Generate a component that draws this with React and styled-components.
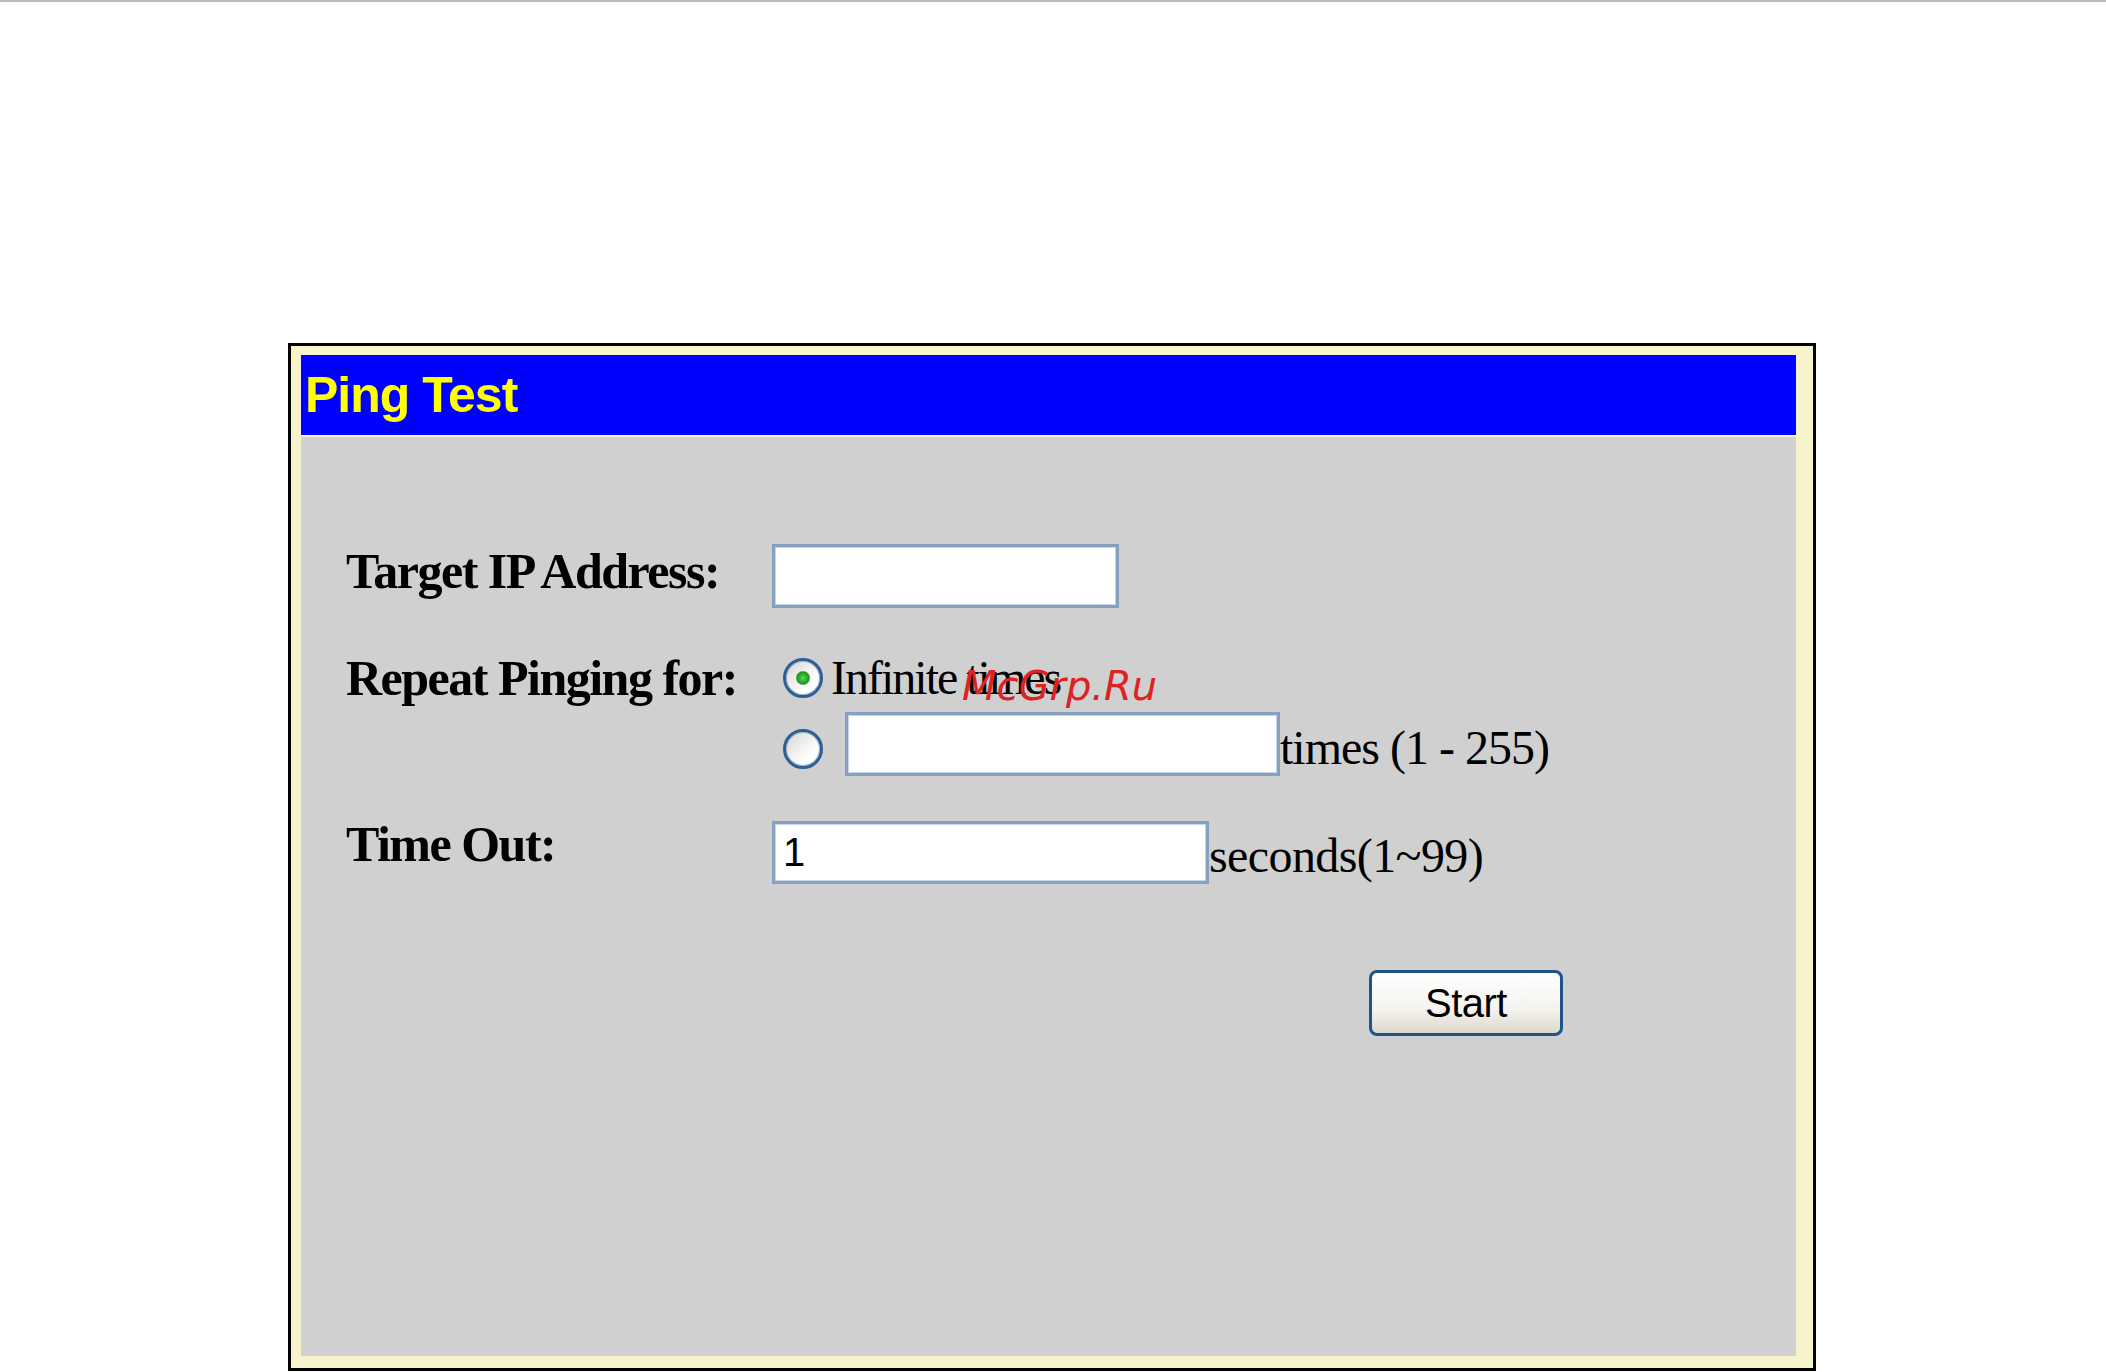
import styled, { createGlobalStyle } from "styled-components";

const GlobalStyle = createGlobalStyle`
  html, body {
    margin: 0;
    padding: 0;
    background: #ffffff;
  }
  * {
    box-sizing: border-box;
  }
`;

const Page = styled.div`
  width: 2106px;
  min-height: 1372px;
  background: #ffffff;
`;

const TopRule = styled.div`
  height: 2px;
  background: #bbbbbb;
`;

const Frame = styled.div`
  width: 1528px;
  margin: 341px 0 0 288px;
  border: 3px solid #000000;
  padding: 9px 17px 12px 10px;
  background: #f5f2cc;
`;

const TitleBar = styled.div`
  height: 80px;
  margin-bottom: 2px;
  padding-left: 4px;
  background: #0000ff;
  color: #ffff00;
  font-family: "Liberation Sans", Arial, sans-serif;
  font-weight: bold;
  font-size: 50px;
  letter-spacing: -1px;
  line-height: 80px;
`;

const Panel = styled.div`
  position: relative;
  height: 919px;
  padding: 106px 0 0 45px;
  background: #d0d0d0;
  font-family: "Liberation Serif", "Times New Roman", serif;
  color: #000000;
`;

const FormRow = styled.div`
  display: grid;
  grid-template-columns: 426px 1fr;
  align-items: start;
  margin-bottom: ${(p) => p.$gap || 0}px;
`;

const Label = styled.div`
  font-weight: bold;
  font-size: 50px;
  line-height: 56px;
  letter-spacing: -1.5px;
  white-space: nowrap;
`;

const Field = styled.div`
  display: flex;
  flex-direction: column;
  gap: ${(p) => p.$gap || 0}px;
  padding-top: ${(p) => p.$offset || 0}px;
`;

const Line = styled.div`
  display: flex;
  align-items: ${(p) => (p.$bottom ? "flex-end" : "center")};
  height: ${(p) => p.$height}px;
`;

const Text = styled.span`
  font-size: 48px;
  line-height: 56px;
  letter-spacing: ${(p) => p.$spacing ?? -1}px;
  white-space: nowrap;
  margin-left: ${(p) => p.$indent || 0}px;
`;

const TextBox = styled.input`
  width: ${(p) => p.$width}px;
  height: ${(p) => p.$height}px;
  margin: 0 0 0 ${(p) => p.$indent || 0}px;
  padding: 0 8px;
  border: 3px solid #86a0c2;
  box-shadow: inset 0 0 0 1px #c9d6e6;
  background: #ffffff;
  font-family: "Liberation Sans", Arial, sans-serif;
  font-size: 40px;
  color: #000000;
  outline: none;
`;

const Radio = styled.input`
  appearance: none;
  width: 40px;
  height: 40px;
  margin: 0 0 0 11px;
  flex: none;
  align-self: ${(p) => (p.$drop ? "flex-start" : "center")};
  margin-top: ${(p) => p.$drop || 0}px;
  border-radius: 50%;
  border: 3px solid #2d5f92;
  box-shadow: inset 0 0 0 1px #9db4cf;
  background: ${(p) =>
    p.checked
      ? "radial-gradient(circle, #5ad85a 0, #22a322 5px, #1b8f1b 6px, transparent 7.5px), linear-gradient(135deg, #d6d6d0, #ffffff 70%)"
      : "linear-gradient(135deg, #d6d6d0, #ffffff 70%)"};
`;

const ButtonRow = styled.div`
  display: flex;
  justify-content: flex-end;
  width: 1217px;
`;

const Button = styled.button`
  width: 194px;
  height: 66px;
  border: 3px solid #1f548a;
  border-radius: 8px;
  background: linear-gradient(#ffffff, #f4f3ef 60%, #dcd8cd);
  font-family: "Liberation Sans", Arial, sans-serif;
  font-size: 40px;
  letter-spacing: -0.5px;
  color: #000000;
  padding: 0;
`;

const Watermark = styled.div`
  position: absolute;
  left: 661px;
  top: 229px;
  font-family: "DejaVu Sans", sans-serif;
  font-style: italic;
  font-size: 40px;
  line-height: 1;
  color: #dd2222;
  pointer-events: none;
`;

const App = () => {
  return (
    <Page>
      <GlobalStyle />
      <TopRule />
      <Frame>
        <TitleBar>Ping Test</TitleBar>
        <Panel>
          <FormRow $gap={42}>
            <Label>Target IP Address:</Label>
            <Field $offset={1}>
              <TextBox $width={347} $height={64} defaultValue="" />
            </Field>
          </FormRow>
          <FormRow $gap={40}>
            <Label>Repeat Pinging for:</Label>
            <Field $gap={6}>
              <Line $height={56}>
                <Radio type="radio" name="repeat" checked readOnly />
                <Text $indent={8} $spacing={-2}>Infinite times</Text>
              </Line>
              <Line $height={64} $bottom>
                <Radio type="radio" name="repeat" checked={false} readOnly $drop={17} />
                <TextBox $width={435} $height={64} $indent={22} defaultValue="" />
                <Text>times (1 - 255)</Text>
              </Line>
            </Field>
          </FormRow>
          <FormRow $gap={86}>
            <Label>Time Out:</Label>
            <Field $offset={5}>
              <Line $height={63} $bottom>
                <TextBox $width={437} $height={63} defaultValue="1" />
                <Text $spacing={-0.6}>seconds(1~99)</Text>
              </Line>
            </Field>
          </FormRow>
          <ButtonRow>
            <Button type="button">Start</Button>
          </ButtonRow>
          <Watermark>McGrp.Ru</Watermark>
        </Panel>
      </Frame>
    </Page>
  );
};

export default App;
